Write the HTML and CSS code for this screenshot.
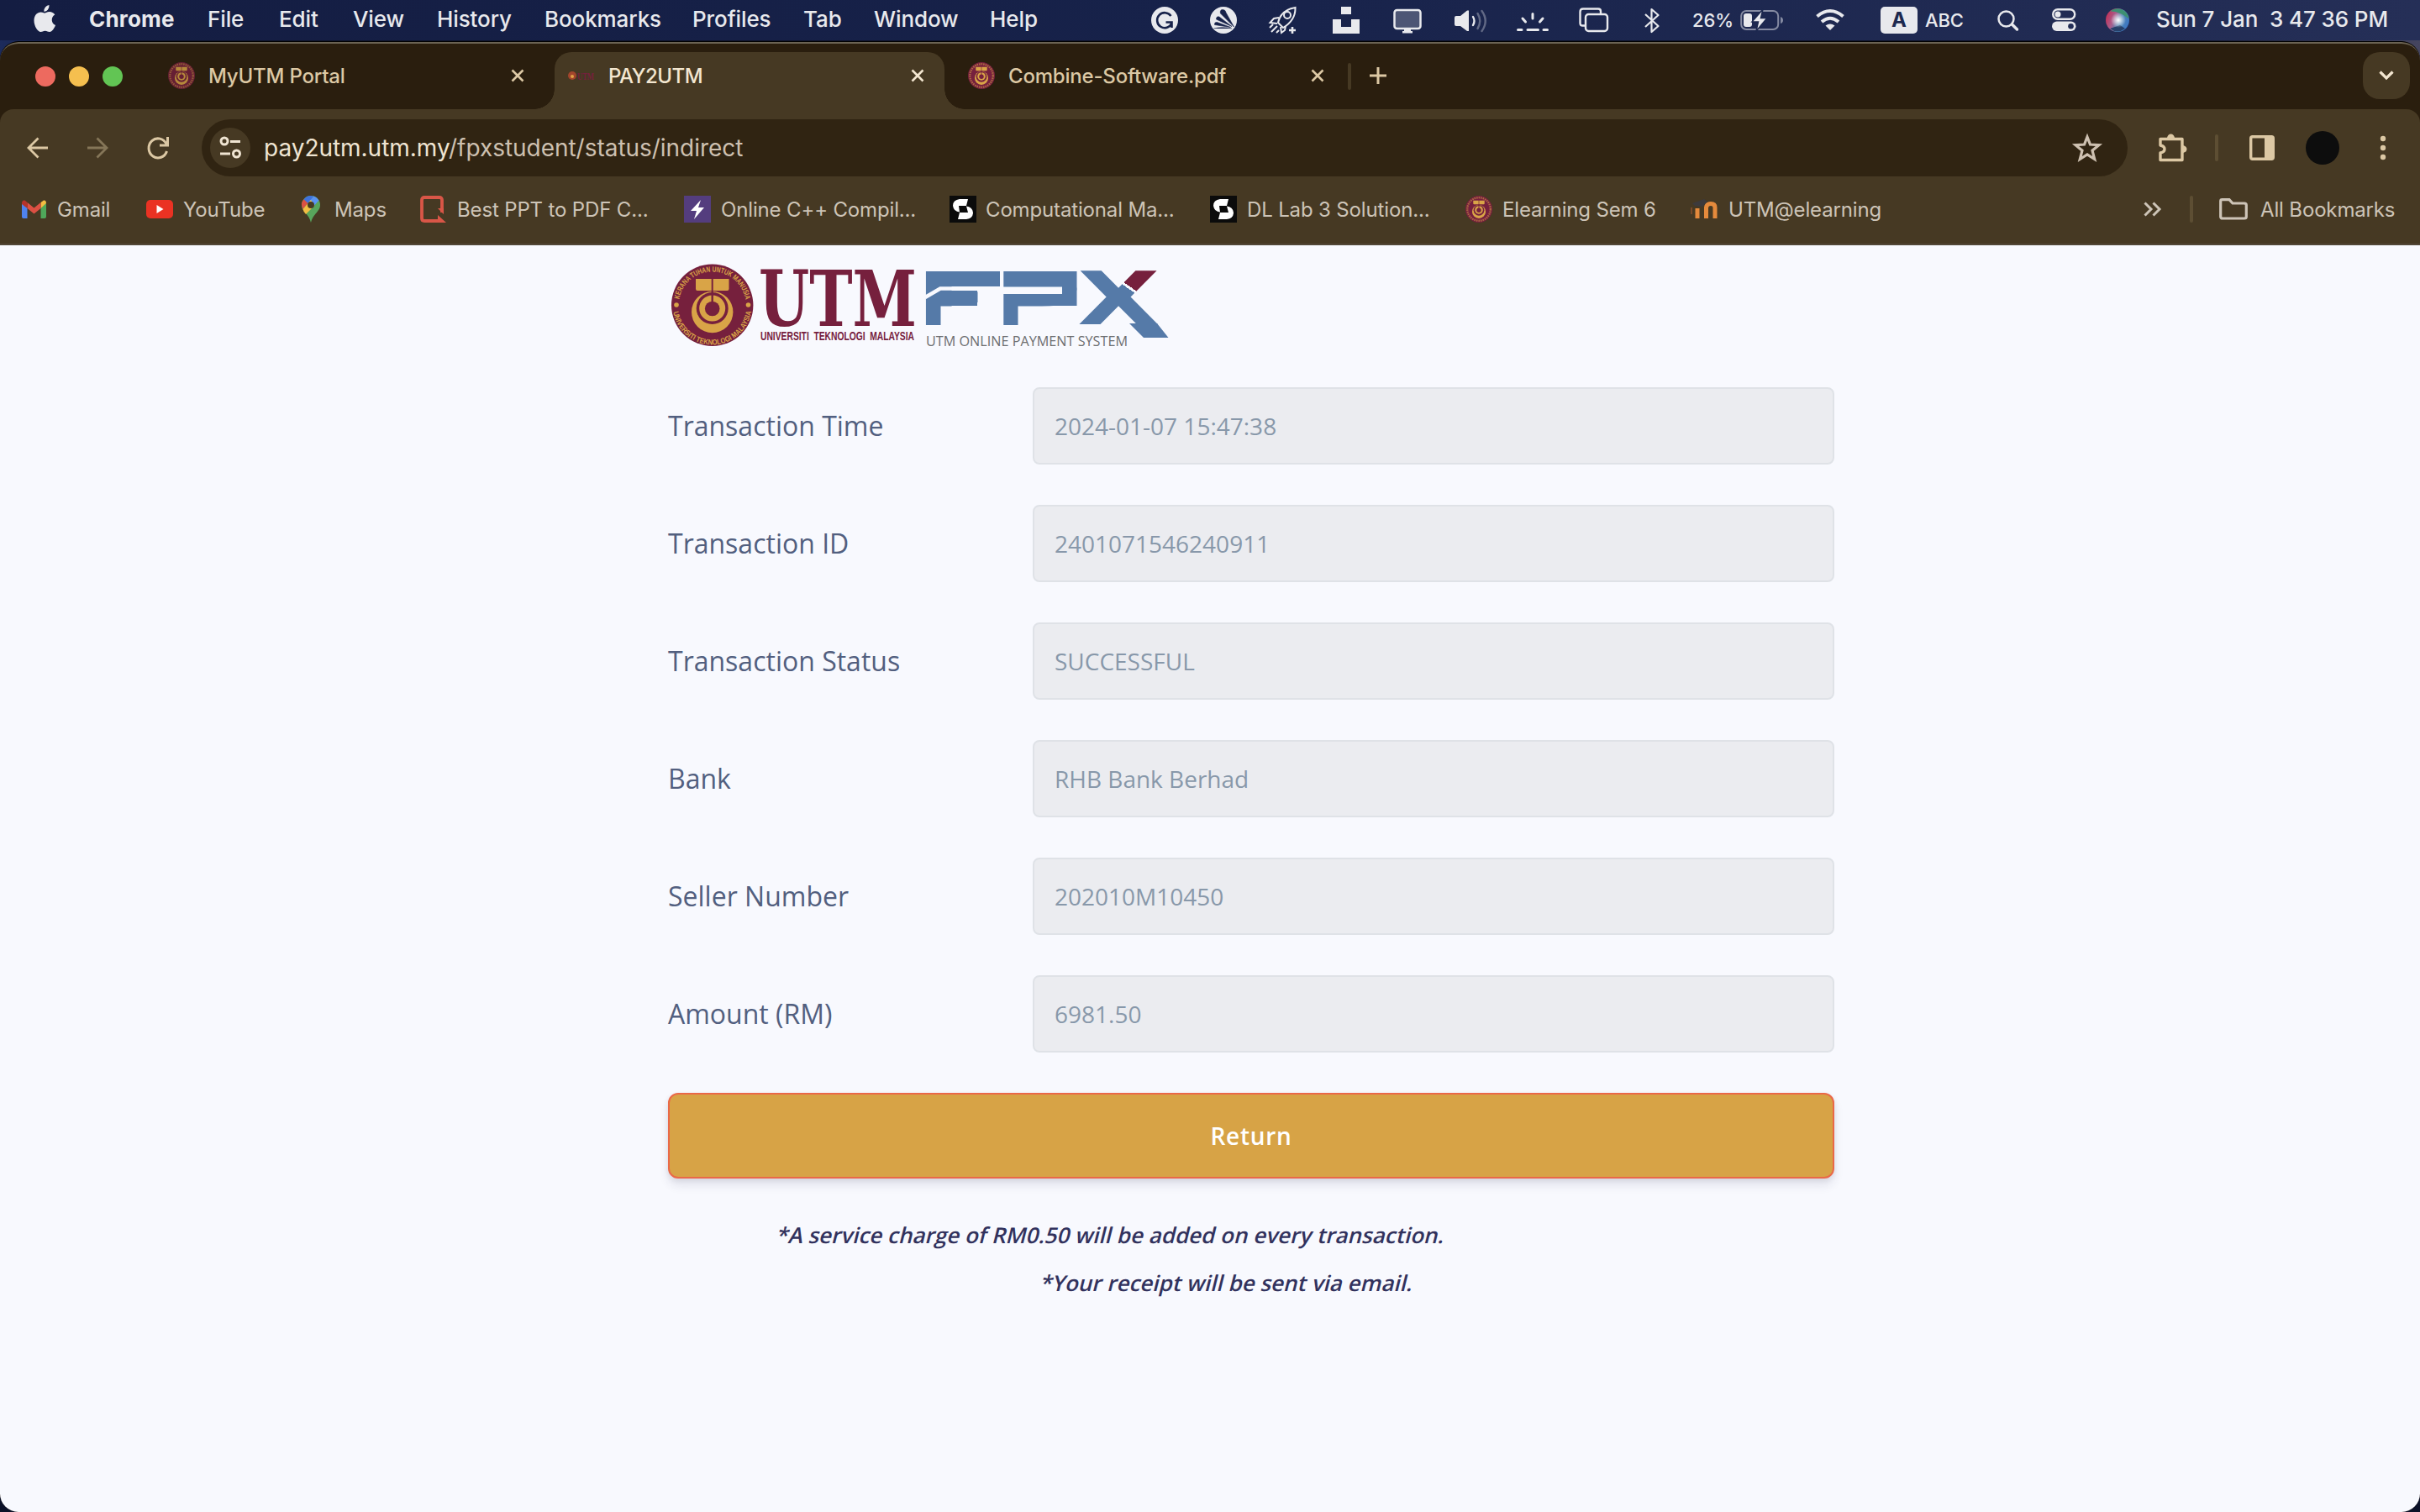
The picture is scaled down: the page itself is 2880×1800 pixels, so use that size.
FILE: index.html
```html
<!DOCTYPE html>
<html lang="en">
<head>
<meta charset="utf-8">
<title>PAY2UTM</title>
<link rel="stylesheet" href="styles.css">
</head>
<body>
<svg class="defs" aria-hidden="true">
  <symbol id="emblem" viewBox="0 0 100 100">
    <circle cx="50" cy="50" r="50" fill="#76203d"/>
    <circle class="ring" cx="50" cy="50" r="43" fill="none" stroke="#d9a447" stroke-width="7" stroke-dasharray="5 3" opacity=".55"/>
    <path d="M29 18H49V32H32Q29 32 29 29ZM51 18H71V29Q71 32 68 32H51Z" fill="#d9a447"/>
    <circle cx="50" cy="59" r="25" fill="#d9a447"/>
    <circle cx="50" cy="54" r="20" fill="#76203d"/>
    <circle cx="50" cy="53" r="15" fill="#d9a447"/>
    <circle cx="50" cy="54" r="8.5" fill="#76203d"/>
    <rect x="48.6" y="32" width="2.8" height="16" fill="#76203d"/>
  </symbol>
  <symbol id="close" viewBox="0 0 16 16"><path d="M1.5 1.5 14.5 14.5M14.5 1.5 1.5 14.5" fill="none" stroke="currentColor" stroke-width="2.6"/></symbol>
  <symbol id="sbook" viewBox="0 0 32 32">
    <rect width="32" height="32" fill="#0b0b0b"/>
    <path d="M22 4H12Q4 5 4 12Q5 19 12 19.500L11 12H20ZM10 28H20Q28 27 28 20Q27 13 20 12.500L22 20H12Z" fill="#fff"/>
  </symbol>
</svg>

<header class="menubar">
  <svg width="26" height="45" viewBox="40 0 26 45"><path d="M58.500 6Q58.800 9.500 56.800 11.700 54.800 14 52.300 13.700 52.100 10.700 54 8.500 55.900 6.400 58.500 6ZM53.300 15.600C54.500 15.600 56 14 58.800 14 61.500 14 64 15.400 65.300 17.400 60 20.500 61 28 66 30 65 33 62 38 59 38 57 38 56 36.700 53.700 36.700 51.300 36.700 50.300 38 48.500 38 45 38 40.500 31 40.500 24.500 40.500 18 44.500 14.400 48.600 14.400 50.700 14.400 52.300 15.600 53.300 15.600Z" fill="#e8e9ed"/></svg>
  <span class="t app">Chrome</span>
  <span class="t">File</span>
  <span class="t">Edit</span>
  <span class="t">View</span>
  <span class="t">History</span>
  <span class="t">Bookmarks</span>
  <span class="t">Profiles</span>
  <span class="t">Tab</span>
  <span class="t">Window</span>
  <span class="t">Help</span>
  <svg width="32" height="48" viewBox="0 0 32 48"><circle cx="16" cy="24" r="16" fill="#e8e9ed"/><path d="M23.500 19A9 9 0 1 0 24.500 27.500M17.500 26.500H24.500V33" fill="none" stroke="#17224a" stroke-width="2.600"/></svg>
  <svg width="32" height="48" viewBox="0 0 32 48"><circle cx="16" cy="24" r="16" fill="#e8e9ed"/><path d="M28.500 32 12.500 16Q11.500 11.500 15 11.500T19 15ZM26 31.500 7.500 23Q7.500 19 11 20ZM24.500 32.500 5.500 29.500Q5 26 8.500 26.500ZM4.500 34Q14 31.500 26 34" fill="#17224a" stroke="#17224a" stroke-width=".6"/></svg>
  <svg width="33" height="48" viewBox="0 0 33 48" fill="none" stroke="#e8e9ed" stroke-width="2"><path d="M11 27Q14 12 31.500 9 32 24 17 33ZM12 21 6 22 1.500 27 10 28M20 31 19 36 15 39 14 32M1 33 5 29M3 38 10 31M9 39 12 36"/><circle cx="22" cy="18" r="4"/><path d="M28 32V40M24 36H32" stroke-width="2.600"/></svg>
  <svg width="32" height="48" viewBox="0 0 32 48"><path d="M10 8H22V17H10ZM0 23H10V32H22V23H32V40H0Z" fill="#e8e9ed"/></svg>
  <svg width="34" height="48" viewBox="0 0 34 48"><rect x="1.500" y="12" width="31" height="22" rx="3" fill="#4d5675" stroke="#e8e9ed" stroke-width="2.500"/><path d="M13 34H21V37H23V39.500H11V37H13Z" fill="#e8e9ed"/></svg>
  <svg width="39" height="48" viewBox="0 0 39 48" fill="none" stroke="#e8e9ed" stroke-width="2.400" stroke-linecap="round"><path d="M2 19H7L15 12.500H17V37H15L7 31H2Q0 31 0 29V21Q0 19 2 19Z" fill="#e8e9ed" stroke="none"/><path d="M22 20Q25 25 22 30"/><path d="M27.500 16Q33 25 27.500 34M32.500 13Q41 25 32.500 37" opacity=".35"/></svg>
  <svg width="38" height="48" viewBox="0 0 38 48" stroke="#e8e9ed" stroke-width="3" stroke-linecap="round"><path d="M19 16.500V22M7 22 10.500 26M31 22 27.500 26M1.500 35.500H6M13 35.500H25.500M32 35.500H36.500"/></svg>
  <svg width="35" height="48" viewBox="0 0 35 48" fill="none" stroke="#e8e9ed" stroke-width="2.400"><path d="M7 30.500H4.500Q1.500 30.500 1.500 27.500V14Q1.500 10.500 5 10.500H23Q26 10.500 26 13.500V16"/><rect x="8" y="17" width="26" height="20" rx="3.500"/></svg>
  <svg width="18" height="48" viewBox="0 0 18 48" fill="none" stroke="#e8e9ed" stroke-width="2.200" stroke-linejoin="round"><path d="M1 17 16.500 31 8.500 38V11L16.500 18 1 32"/></svg>
  <span class="t small">26%</span>
  <svg width="51" height="48" viewBox="0 0 51 48"><rect x="1.200" y="13" width="44" height="22" rx="6" fill="none" stroke="#858ba2" stroke-width="2"/><path d="M48 20V28Q51 27 51 24T48 20Z" fill="#858ba2"/><rect x="4" y="16" width="10" height="16" rx="3" fill="#e8e9ed"/><path d="M27 11 14 26H21.500L19 37 32 21.500H24.500Z" fill="#e8e9ed" stroke="#1d294f" stroke-width="1.500"/></svg>
  <svg width="34" height="48" viewBox="0 0 34 48" fill="none" stroke="#e8e9ed" stroke-width="4"><path d="M1.500 19.500Q17 6.500 32.500 19.500M7 26Q17 17.500 27 26"/><path d="M17 36 11.500 30.500Q17 26.500 22.500 30.500Z" fill="#e8e9ed" stroke="none"/></svg>
  <span class="key">A</span>
  <span class="t small">ABC</span>
  <svg width="26" height="48" viewBox="0 0 26 48" fill="none" stroke="#e8e9ed" stroke-linecap="round"><circle cx="10.500" cy="22.500" r="9" stroke-width="2.500"/><path d="M17.500 29 23.500 35" stroke-width="3.500"/></svg>
  <svg width="29" height="48" viewBox="0 0 29 48"><rect x="1.200" y="11.200" width="26" height="11.500" rx="5.700" fill="none" stroke="#e8e9ed" stroke-width="2.400"/><circle cx="7" cy="17" r="3.500" fill="#e8e9ed"/><rect y="25.500" width="28.500" height="11.500" rx="5.700" fill="#e8e9ed"/><circle cx="22.500" cy="31.200" r="3.300" fill="#222d56"/></svg>
  <svg width="28" height="48" viewBox="0 0 28 48"><defs><linearGradient id="siri" x1="0" y1=".3" x2="1" y2=".7"><stop offset="0" stop-color="#c22f55"/><stop offset=".35" stop-color="#a85f8e"/><stop offset=".6" stop-color="#4f86b5"/><stop offset="1" stop-color="#3a74c4"/></linearGradient><radialGradient id="glow"><stop offset="0" stop-color="#fff"/><stop offset=".4" stop-color="#fff" stop-opacity=".6"/><stop offset="1" stop-color="#fff" stop-opacity="0"/></radialGradient></defs><circle cx="14" cy="24" r="14" fill="url(#siri)"/><path d="M5 13.500Q14 7 23 13.500 28 19 27 22 16 13 5 13.500Z" fill="#3d8f72"/><path d="M5 34Q14 41 23 34L17 30Z" fill="#27416b"/><circle cx="15" cy="24" r="9" fill="url(#glow)"/></svg>
  <span class="t">Sun 7 Jan&nbsp; 3 47 36 PM</span>
</header>

<div class="window">
  <div class="tabs">
    <svg class="lights" width="104" height="24" viewBox="0 0 104 24"><circle cx="12" cy="12" r="12" fill="#ed6a5f"/><circle cx="52" cy="12" r="12" fill="#f5bf4f"/><circle cx="92" cy="12" r="12" fill="#62c554"/></svg>
    <div class="tab">
      <svg class="dim" width="32" height="32"><use href="#emblem"/></svg>
      <span class="t">MyUTM Portal</span>
      <svg width="16" height="16"><use href="#close"/></svg>
    </div>
    <div class="tab active">
      <svg width="32" height="14" viewBox="0 0 32 14"><circle cx="5" cy="7" r="5" fill="#a2452c"/><circle cx="5" cy="8" r="2" fill="#e0a145"/><text x="11" y="11.500" textLength="20" lengthAdjust="spacingAndGlyphs" class="mini">UTM</text></svg>
      <span class="t">PAY2UTM</span>
      <svg width="16" height="16"><use href="#close"/></svg>
    </div>
    <div class="tab last">
      <svg width="32" height="32"><use href="#emblem"/></svg>
      <span class="t">Combine-Software.pdf</span>
      <svg width="16" height="16"><use href="#close"/></svg>
    </div>
    <i class="sep"></i>
    <svg class="plus" width="20" height="20" viewBox="0 0 20 20"><path d="M10 0V20M0 10H20" stroke="#dcc8a4" stroke-width="3"/></svg>
    <span class="drop"><svg width="18" height="12" viewBox="0 0 18 12"><path d="M1.500 1.500 9 9 16.500 1.500" fill="none" stroke="#f3e6d0" stroke-width="3.200"/></svg></span>
  </div>

  <div class="toolbar">
    <svg width="26" height="26" viewBox="0 0 26 26" fill="none" stroke="#dcc8a4" stroke-width="2.800"><path d="M25 13H3M13.500 1.500 2 13 13.500 24.500"/></svg>
    <svg width="26" height="26" viewBox="0 0 26 26" fill="none" stroke="#857658" stroke-width="2.800"><path d="M1 13H23M12.500 1.500 24 13 12.500 24.500"/></svg>
    <svg width="28" height="28" viewBox="0 0 28 28" fill="none" stroke="#dcc8a4" stroke-width="3"><path d="M24 9.500A11 11.500 0 1 0 24.500 18M25.500 1V11H16"/></svg>
    <div class="omnibox">
      <span class="site"><svg width="26" height="28" viewBox="0 0 26 28" fill="none" stroke="#efe4d2" stroke-width="3"><circle cx="6" cy="6" r="4"/><path d="M13 6.500H25M1 21H13"/><circle cx="20.500" cy="21" r="4"/></svg></span>
      <span class="t url">pay2utm.utm.my<span class="path">/fpxstudent/status/indirect</span></span>
      <svg width="34" height="34" viewBox="0 0 34 34"><path d="M17 4 20.500 13 31 13.700 23 20.200 25.700 30.500 17 25 8.300 30.500 11 20.200 3 13.700 13.500 13Z" fill="none" stroke="#cdc0b0" stroke-width="3.200"/></svg>
    </div>
    <svg width="34" height="34" viewBox="0 0 34 34"><path d="M2 6.500H28V31.500H2V23Q7 22 7 18.500T2 14Z" fill="none" stroke="#dcc8a4" stroke-width="3.400" stroke-linejoin="round"/><path d="M10 5Q11 .5 14.500 .5T19 5ZM29 14Q33.500 15 33.500 18.500T29 23Z" fill="#dcc8a4"/></svg>
    <i class="sep"></i>
    <svg width="30" height="30" viewBox="0 0 30 30"><rect x="1.700" y="1.700" width="26.600" height="26.600" rx="2" fill="none" stroke="#dcc8a4" stroke-width="3.400"/><path d="M18 2H28V28H18Z" fill="#dcc8a4"/></svg>
    <span class="avatar"></span>
    <svg width="8" height="30" viewBox="0 0 8 30" fill="#dcc8a4"><circle cx="4" cy="4" r="3.200"/><circle cx="4" cy="15" r="3.200"/><circle cx="4" cy="26" r="3.200"/></svg>
  </div>

  <nav class="bookmarks">
    <svg width="29" height="22" viewBox="0 0 29 22"><path d="M0 4V20Q0 22 2 22H6.500V9Z" fill="#4f83ee"/><path d="M22.500 9V22H27Q29 22 29 20V4Z" fill="#4fa85a"/><path d="M22.500 3 26 .5Q29 0 29 4L22.500 10Z" fill="#f2bd42"/><path d="M6.500 3 14.500 9.500 22.500 3V10L14.500 16.500 6.500 10Z" fill="#dc5043"/><path d="M0 4Q0 0 3.500 .5L6.500 3V10L0 5Z" fill="#b5332a"/></svg>
    <span class="t">Gmail</span>
    <svg width="32" height="22" viewBox="0 0 32 22"><rect width="32" height="22" rx="5" fill="#ea3223"/><path d="M12.500 6 20.500 11 12.500 16Z" fill="#fff"/></svg>
    <span class="t">YouTube</span>
    <svg width="22" height="32" viewBox="0 0 22 32"><path d="M0 11A11 11 0 0 1 22 11C22 19 13 22 11 32 9 22 0 19 0 11Z" fill="#58a55c"/><path d="M2.500 4.200A11 11 0 0 1 14.500 .6L7 10Z" fill="#3f72dc"/><path d="M14.500 .6A11 11 0 0 1 20.500 5.500L12 15 7 9Z" fill="#5a93f2"/><path d="M2.500 4.200 7.500 9 1.500 16Q-2 9 2.500 4.200Z" fill="#dc5043"/><path d="M1.500 16 11 5 15 12 5 22Q2 19 1.500 16Z" fill="#f2bd42"/><circle cx="11" cy="11" r="4" fill="#463923"/></svg>
    <span class="t">Maps</span>
    <svg width="32" height="32" viewBox="0 0 32 32"><path d="M26 20V5Q26 2 23 2H5Q2 2 2 5V27Q2 30 5 30H22" fill="none" stroke="#d95647" stroke-width="3.800"/><path d="M21 15H28V22ZM21 23 31 32H21Z" fill="#d95647"/></svg>
    <span class="t">Best PPT to PDF C...</span>
    <svg width="32" height="32" viewBox="0 0 32 32"><rect width="32" height="32" fill="#543d7e"/><path d="M20 5 8 18H15L12 28 24 14H17Z" fill="#fff"/></svg>
    <span class="t">Online C++ Compil...</span>
    <svg width="32" height="32"><use href="#sbook"/></svg>
    <span class="t">Computational Ma...</span>
    <svg width="32" height="32"><use href="#sbook"/></svg>
    <span class="t">DL Lab 3 Solution...</span>
    <svg width="32" height="32"><use href="#emblem"/></svg>
    <span class="t">Elearning Sem 6</span>
    <svg width="32" height="24" viewBox="0 0 32 24"><path d="M8 23V11M18.500 23V10Q19 5.500 24 5.500T29 10V23" fill="none" stroke="#e58a3c" stroke-width="5"/><path d="M2 5 16 0 20 3 14 9 5 8Z" fill="#3c3a3c"/><path d="M1 10V18" stroke="#7a4a2a" stroke-width="2"/></svg>
    <span class="t">UTM@elearning</span>
    <svg width="22" height="18" viewBox="0 0 22 18"><path d="M1.500 1.500 9 9 1.500 16.500M11.500 1.500 19 9 11.500 16.500" fill="none" stroke="#cdc4b7" stroke-width="3"/></svg>
    <i class="sep"></i>
    <svg width="34" height="26" viewBox="0 0 34 26"><path d="M1.700 22V3.500Q1.700 1.700 3.500 1.700H12L16 6H30Q32.300 6 32.300 8V22Q32.300 24 30 24H4Q1.700 24 1.700 22Z" fill="none" stroke="#cdc4b7" stroke-width="3.200"/></svg>
    <span class="t">All Bookmarks</span>
  </nav>

  <main class="page">
    <div class="content">
      <svg class="logo" width="610" height="106" viewBox="795 310 610 106" role="img">
        <defs>
          <path id="arcTop" d="M807.700 363.500A40 40 0 0 1 887.700 363.500"/>
          <path id="arcBottom" d="M800.700 363.500A47 47 0 0 0 894.700 363.500"/>
          <linearGradient id="xfill" gradientUnits="userSpaceOnUse" x1="0" y1="0" x2="88" y2="-88"><stop offset=".48" stop-color="#557aa8"/><stop offset=".48" stop-color="#f8f9fe"/><stop offset=".5" stop-color="#f8f9fe"/><stop offset=".5" stop-color="#76203d"/></linearGradient>
        </defs>
        <circle cx="847.700" cy="363.300" r="48.700" fill="#76203d"/>
        <path d="M828 332H846.700V346H830Q828 346 828 344ZM848.700 332H867.500V344Q867.500 346 865.500 346H848.700Z" fill="#d9a447"/>
        <circle cx="847.700" cy="371.500" r="24.700" fill="#d9a447"/>
        <circle cx="847.700" cy="367" r="19" fill="#76203d"/>
        <circle cx="847.700" cy="367" r="15.500" fill="#d9a447"/>
        <circle cx="847.700" cy="367.500" r="8.800" fill="#76203d"/>
        <path d="M847.700 346V362" stroke="#76203d" stroke-width="2.400"/>
        <circle cx="805" cy="363" r="2.800" fill="#d9a447"/><circle cx="890.500" cy="363" r="2.800" fill="#d9a447"/>
        <text class="motto"><textPath href="#arcTop" startOffset="7" textLength="112" lengthAdjust="spacingAndGlyphs">KERANA TUHAN UNTUK MANUSIA</textPath></text>
        <text class="motto"><textPath href="#arcBottom" startOffset="8" textLength="132" lengthAdjust="spacingAndGlyphs">UNIVERSITI TEKNOLOGI MALAYSIA</textPath></text>
        <text class="utm" x="903" y="388" textLength="188" lengthAdjust="spacingAndGlyphs">UTM</text>
        <text class="uni" x="905" y="404.500" textLength="183" lengthAdjust="spacingAndGlyphs">UNIVERSITI TEKNOLOGI MALAYSIA</text>
        <text class="fpx" transform="translate(1087 387) scale(1.850 1)">F</text>
        <text class="fpx" transform="translate(1181 387) scale(1.650 1)">P</text>
        <text class="fpx x" transform="translate(1282 386) scale(1.450 1)">X</text>
        <!-- accent bars and slits of the payment mark -->
        <path d="M1110 323H1190V341H1110ZM1110 346H1163V364H1110ZM1200 323H1281.500V364H1200ZM1344 385H1377L1390.500 402H1361Z" fill="#557aa8"/>
        <path d="M1119.500 364.500H1165V388H1119.500ZM1163.500 342H1192V366H1163.500ZM1211.500 364.500H1283V388H1211.500ZM1193 341.500H1264V350H1193Z" fill="#f8f9fe"/>
        <path d="M1101 354 1119 343.500H1190" fill="none" stroke="#f8f9fe" stroke-width="4.500"/>
        <text class="tag" x="1102" y="412" textLength="240" lengthAdjust="spacingAndGlyphs">UTM ONLINE PAYMENT SYSTEM</text>
      </svg>

      <form class="form">
        <label for="time">Transaction Time</label><output id="time">2024-01-07 15:47:38</output>
        <label for="tid">Transaction ID</label><output id="tid">2401071546240911</output>
        <label for="status">Transaction Status</label><output id="status">SUCCESSFUL</output>
        <label for="bank">Bank</label><output id="bank">RHB Bank Berhad</output>
        <label for="seller">Seller Number</label><output id="seller">202010M10450</output>
        <label for="amount">Amount (RM)</label><output id="amount">6981.50</output>
        <button type="button">Return</button>
      </form>
      <p class="note">*A service charge of RM0.50 will be added on every transaction.</p>
      <p class="note second">*Your receipt will be sent via email.</p>
    </div>
  </main>
</div>
</body>
</html>
```
FILE: styles.css
```css
* { box-sizing: border-box; }

body {
  margin: 0;
  width: 2880px;
  height: 1800px;
  overflow: hidden;
  background: linear-gradient(90deg, #1c2b5c, #10152a 5%, #10152a 90%, #45455f) 0 0 / 100% 300px no-repeat #0b1128;
  font-family: Inter, "Liberation Sans", sans-serif;
}

svg { display: block; flex: none; overflow: visible; }
.defs { position: absolute; width: 0; height: 0; }
.t { justify-self: start; white-space: nowrap; }

/* macOS menu bar */
.menubar {
  display: grid;
  grid-template-columns: 66px 142px 85px 88px 100px 128px 176px 132px 84px 138px 191px 70px 70px 76px 72px 73px 74px 74px 78px 58px 56px 90px 77px 54px 85px 65px 64px 61px auto;
  height: 48px;
  padding-left: 40px;
  background: linear-gradient(90deg, #141d42, #17224a 50%, #252f57);
  color: #e8e9ed;
  font-size: 26px;
  font-weight: 500;
  letter-spacing: -.1px;
  line-height: 45px;
}
.menubar .t { margin-left: -1px; }
.menubar .app { margin-left: 0; font-weight: 700; letter-spacing: .2px; }
.menubar .small { font-size: 22px; line-height: 48px; }
.key {
  width: 44px;
  height: 32px;
  margin-top: 8px;
  border-radius: 5px;
  background: #e8e9ed;
  color: #1d294f;
  font-size: 24px;
  font-weight: 700;
  line-height: 32px;
  text-align: center;
}

/* browser window */
.window {
  height: 1751px;
  margin-top: 1px;
  border-top: 1px solid #000;
  border-radius: 22px;
  overflow: hidden;
  background: #2a1e0e;
}
.sep { width: 4px; height: 32px; border-radius: 2px; background: #5d4e33; }

.tabs {
  display: flex;
  align-items: center;
  height: 80px;
  padding: 0 12px 0 42px;
  border-top: 2px solid #6b6353;
  border-radius: 22px 22px 0 0;
  color: #dcc8a4;
  font-size: 24px;
  font-weight: 450;
  letter-spacing: -.2px;
}
.tab {
  display: grid;
  grid-template-columns: 48px 1fr 16px;
  align-items: center;
  width: 464px;
  height: 68px;
  margin-top: 10px;
  padding: 0 24px 12px 16px;
}
.lights { margin-right: 38px; }
.tabs .tab:nth-child(2) { width: 476px; padding-right: 36px; }
.active {
  position: relative;
  border-radius: 20px 20px 0 0;
  background: #463923;
  color: #f3e6d0;
}
.active .t { letter-spacing: -.5px; }
.active::before, .active::after {
  content: "";
  position: absolute;
  bottom: 0;
  width: 24px;
  height: 24px;
}
.active::before { left: -24px; background: radial-gradient(circle at 0 0, transparent 23.500px, #463923 24px); }
.active::after { right: -24px; background: radial-gradient(circle at 100% 0, transparent 23.500px, #463923 24px); }
.tab.last { width: 480px; padding: 0 28px 12px 28px; }
.tabs .sep { background: #463923; }
.plus { margin: -2px 0 0 22px; }
.dim { opacity: .8; }
.mini { font: bold 12px "Liberation Serif", serif; fill: #76203d; }
.drop {
  display: grid;
  place-items: center;
  width: 56px;
  height: 56px;
  margin: -2px 0 0 auto;
  border-radius: 20px;
  background: #463923;
}

.toolbar {
  display: grid;
  grid-template-columns: 71px 71px 66px 2329px 67px 41px 67px 88px 8px;
  align-items: center;
  height: 92px;
  padding-left: 32px;
  border-radius: 16px 16px 0 0;
  background: #463923;
}
.omnibox {
  display: flex;
  align-items: center;
  width: 2292px;
  height: 68px;
  padding: 0 31px 0 10px;
  border-radius: 34px;
  background: #302412;
}
.site {
  display: grid;
  place-items: center;
  width: 48px;
  height: 48px;
  margin-right: 16px;
  border-radius: 50%;
  background: #463923;
}
.url { margin-right: auto; color: #efe4d2; font-size: 28px; letter-spacing: -.03px; }
.path { color: #cdc0b0; }
.avatar { width: 40px; height: 40px; border-radius: 50%; background: #0d0d0d; }

.bookmarks {
  display: grid;
  grid-template-columns: 43px 105px 45px 140px 40px 101px 45px 269px 45px 271px 44px 266px 45px 259px 45px 223px 46px 493px 55px 35px 50px auto;
  align-items: center;
  height: 70px;
  padding: 0 0 14px 26px;
  background: #463923;
  border-bottom: 2px solid #524737;
  color: #cdc4b7;
  font-size: 24px;
  letter-spacing: -.15px;
}
.bookmarks .t { margin-left: -1px; }

/* payment status page */
.page {
  height: 1508px;
  background: #f8f9fe;
  color: #525f7f;
  font-family: "Open Sans", "Noto Sans", sans-serif;
}
.content { width: 1388px; margin-left: 795px; padding-top: 18px; }
.form {
  display: grid;
  grid-template-columns: 434px 954px;
  row-gap: 48px;
  margin-top: 45px;
}
.form label { font-size: 32px; line-height: 92px; }
.form output {
  height: 92px;
  padding-left: 24px;
  border: 2px solid #dfe2e7;
  border-radius: 8px;
  background: #ebecf0;
  color: #8898aa;
  font-size: 28px;
  line-height: 88px;
}
.form button {
  grid-column: 1 / -1;
  height: 102px;
  padding: 0;
  border: 2px solid #ea6848;
  border-radius: 12px;
  background: #d7a346;
  box-shadow: 0 8px 12px rgba(50, 50, 93, .11), 0 2px 6px rgba(0, 0, 0, .08);
  color: #fff;
  font: 600 28px/98px "Open Sans", sans-serif;
  letter-spacing: .025em;
}

/* upright letterforms slanted about their baseline */
.note {
  width: fit-content;
  margin: 43px 0 0 128px;
  color: #32325d;
  font-size: 26px;
  font-weight: 600;
  line-height: 48px;
  white-space: nowrap;
  transform: skewX(-14deg);
  transform-origin: 0 34px;
}
.note.second { margin: 9px 0 0 442px; }

.motto { font: bold 9px "Liberation Sans", sans-serif; fill: #d9a447; }
.utm { font: bold 91px "DejaVu Serif", serif; fill: #76203d; }
.uni { font: bold 15px "Liberation Sans", sans-serif; fill: #76203d; word-spacing: 4px; }
.fpx { font: bold 88px "DejaVu Sans", sans-serif; fill: #557aa8; }
.fpx.x { fill: url(#xfill); }
.tag { font: 17px "Open Sans", sans-serif; fill: #6d6e70; }
```
